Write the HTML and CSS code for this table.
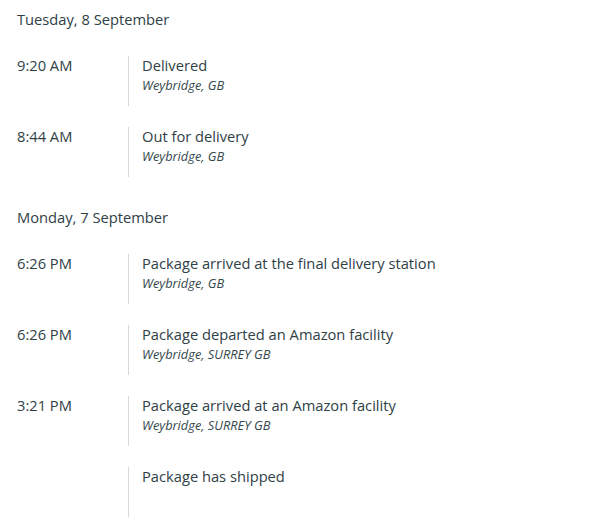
FILE: index.html
```html
<!DOCTYPE html>
<html>
<head>
<meta charset="utf-8">
<link rel="stylesheet" href="styles.css">
</head>
<body>
<div class="tracking">
  <section class="day">
    <h3 class="day-title">Tuesday, 8 September</h3>
    <div class="event">
      <div class="time">9:20 AM</div>
      <div class="detail">
        <div class="status">Delivered</div>
        <div class="place">Weybridge, GB</div>
      </div>
    </div>
    <div class="event">
      <div class="time">8:44 AM</div>
      <div class="detail">
        <div class="status">Out for delivery</div>
        <div class="place">Weybridge, GB</div>
      </div>
    </div>
  </section>
  <section class="day">
    <h3 class="day-title">Monday, 7 September</h3>
    <div class="event">
      <div class="time">6:26 PM</div>
      <div class="detail">
        <div class="status">Package arrived at the final delivery station</div>
        <div class="place">Weybridge, GB</div>
      </div>
    </div>
    <div class="event">
      <div class="time">6:26 PM</div>
      <div class="detail">
        <div class="status">Package departed an Amazon facility</div>
        <div class="place">Weybridge, SURREY GB</div>
      </div>
    </div>
    <div class="event">
      <div class="time">3:21 PM</div>
      <div class="detail">
        <div class="status">Package arrived at an Amazon facility</div>
        <div class="place">Weybridge, SURREY GB</div>
      </div>
    </div>
    <div class="event">
      <div class="time"></div>
      <div class="detail">
        <div class="status">Package has shipped</div>
      </div>
    </div>
  </section>
</div>
</body>
</html>
```

FILE: styles.css
```css
html, body {
  margin: 0;
  padding: 0;
  background: #ffffff;
}
body {
  font-family: "Open Sans", "Noto Sans", sans-serif;
  color: #2f4146;
  font-size: 14.7px;
  line-height: 20px;
}
.tracking {
  padding: 9px 0 0 17px;
  display: flex;
  flex-direction: column;
  gap: 30px;
}
.day {
  display: flex;
  flex-direction: column;
  gap: 21px;
}
.day-title {
  margin: 0 0 6px 0;
  font-size: 14.7px;
  font-weight: normal;
  line-height: 20px;
}
.event {
  display: flex;
  height: 50px;
}
.time {
  width: 111px;
  flex: none;
  line-height: 18px;
}
.detail {
  border-left: 1px solid #d5d9d9;
  padding-left: 13px;
}
.status {
  line-height: 18px;
}
.place {
  font-style: italic;
  font-size: 12.8px;
  line-height: 22px;
  color: #35484d;
}
```
